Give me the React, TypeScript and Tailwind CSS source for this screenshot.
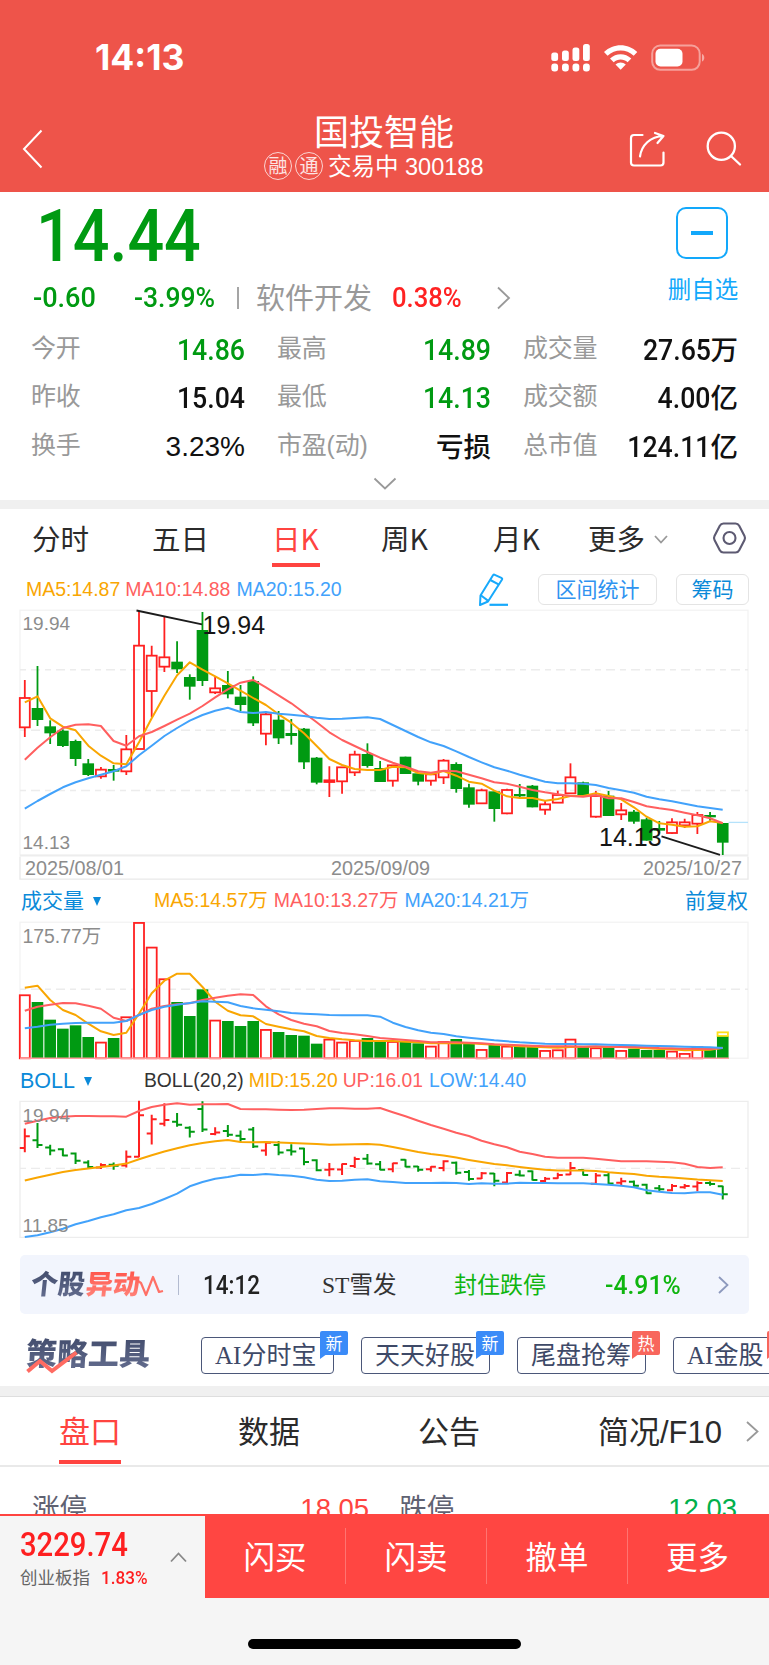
import type { ReactNode } from "react";

type Candle = { up: boolean; top: number; bottom: number; high: number; low: number };

const RED = "#ff2020";
const GREEN = "#009a12";
const ORANGE = "#f9a602";
const PINK = "#ff5f5f";
const BLUE = "#42a2fb";

const FIRST_X = 24.8;
const STEP = 12.69;

// direction, body top, body bottom, high, low (thirds of a pixel)
const rawCandles: [string, number, number, number, number][] = [
  ["r", 294, 382, 240, 411], ["g", 324, 360, 198, 378], ["g", 379, 400, 361, 432], ["g", 392, 438, 388, 441],
  ["g", 423, 477, 419, 498], ["g", 490, 525, 477, 528], ["r", 509, 529, 501, 536], ["g", 507, 515, 495, 542],
  ["r", 448, 514, 405, 525], ["r", 137, 447, 32, 447], ["r", 167, 273, 137, 352], ["r", 172, 200, 50, 216],
  ["g", 185, 208, 124, 219], ["g", 231, 260, 223, 299], ["g", 90, 243, 36, 258], ["r", 265, 277, 230, 282],
  ["g", 255, 283, 213, 295], ["g", 290, 315, 255, 333], ["g", 243, 370, 229, 378], ["r", 343, 401, 335, 436],
  ["g", 359, 415, 333, 432], ["g", 399, 408, 357, 434], ["g", 386, 487, 384, 507], ["g", 473, 548, 471, 553],
  ["r", 541, 546, 499, 591], ["r", 502, 544, 502, 581], ["r", 464, 517, 452, 528], ["g", 462, 498, 430, 503],
  ["g", 504, 546, 483, 546], ["r", 496, 542, 496, 560], ["g", 470, 522, 470, 522], ["g", 520, 545, 520, 556],
  ["r", 523, 542, 523, 557], ["r", 482, 532, 477, 552], ["g", 492, 567, 487, 578], ["g", 562, 614, 551, 623],
  ["r", 571, 610, 566, 610], ["g", 574, 627, 574, 665], ["r", 570, 640, 566, 643], ["g", 582, 589, 552, 592],
  ["g", 557, 622, 555, 622], ["r", 613, 629, 603, 644], ["r", 585, 608, 572, 608], ["r", 532, 580, 490, 580],
  ["g", 547, 585, 545, 585], ["r", 588, 650, 573, 653], ["g", 587, 648, 573, 648], ["r", 631, 643, 609, 660],
  ["g", 635, 665, 630, 671], ["g", 658, 722, 653, 722], ["g", 684, 692, 663, 700], ["r", 667, 699, 655, 702],
  ["r", 667, 676, 656, 684], ["r", 645, 671, 636, 702], ["g", 645, 652, 636, 662], ["g", 669, 728, 669, 765],
];

const candles: Candle[] = rawCandles.map(([d, top, bottom, high, low]) => ({ up: d === "r", top, bottom, high, low }));

const ma5 = [307, 289, 355, 380, 391, 437, 467, 490, 493, 427, 355, 287, 226, 187, 209, 229, 250, 272, 294, 315, 343, 368, 400, 438, 477, 495, 507, 510, 510, 500, 502, 519, 523, 513, 527, 545, 551, 572, 589, 594, 594, 602, 597, 588, 588, 580, 588, 598, 622, 650, 670, 674, 680, 679, 664, 669];
const ma10 = [479, 443, 412, 384, 374, 373, 378, 423, 437, 409, 396, 378, 359, 341, 318, 292, 268, 248, 240, 262, 286, 310, 338, 367, 397, 420, 438, 456, 473, 488, 500, 514, 518, 512, 514, 524, 535, 547, 551, 560, 570, 577, 583, 588, 590, 585, 595, 595, 606, 619, 625, 630, 638, 646, 655, 670];
const ma20 = [626, 603, 582, 562, 547, 535, 524, 514, 499, 466, 437, 408, 384, 362, 345, 332, 323, 336, 339, 336, 341, 344, 348, 353, 357, 356, 354, 352, 357, 375, 393, 411, 427, 438, 454, 471, 487, 502, 512, 524, 535, 545, 550, 550, 551, 555, 564, 571, 578, 590, 598, 604, 611, 619, 624, 629];

const volumes = [344, 366, 419, 446, 436, 471, 486, 474, 410, 127, 201, 296, 366, 408, 328, 420, 423, 438, 423, 448, 456, 465, 467, 491, 477, 486, 481, 474, 486, 484, 486, 490, 498, 484, 477, 488, 508, 492, 498, 499, 500, 511, 509, 477, 501, 503, 501, 511, 506, 510, 510, 513, 520, 500, 510, 468];
const vol5 = [323, 317, 360, 390, 405, 431, 454, 465, 458, 401, 340, 302, 281, 281, 321, 365, 392, 406, 409, 432, 440, 448, 454, 468, 474, 478, 481, 483, 483, 483, 485, 487, 490, 490, 489, 490, 492, 494, 496, 499, 500, 502, 503, 501, 500, 500, 501, 501, 503, 505, 507, 508, 511, 510, 509, 503];
const vol10 = [392, 380, 374, 369, 370, 377, 386, 413, 423, 405, 386, 378, 373, 370, 360, 353, 347, 343, 345, 379, 403, 420, 431, 439, 453, 459, 463, 468, 474, 477, 480, 483, 487, 487, 487, 488, 490, 493, 494, 496, 497, 499, 499, 499, 500, 499, 500, 501, 501, 502, 504, 505, 506, 506, 507, 504];
const vol20 = [445, 440, 434, 431, 429, 428, 428, 428, 423, 405, 390, 380, 374, 369, 364, 365, 367, 378, 385, 389, 394, 399, 401, 403, 405, 406, 406, 406, 410, 428, 441, 451, 458, 462, 469, 473, 477, 481, 484, 487, 489, 491, 492, 492, 493, 493, 494, 495, 496, 497, 498, 499, 500, 501, 502, 504];

const bollUp = [176, 167, 159, 155, 153, 153, 154, 154, 155, 138, 126, 119, 115, 119, 118, 118, 117, 132, 133, 133, 134, 135, 134, 132, 130, 130, 131, 131, 129, 142, 154, 167, 180, 191, 203, 213, 227, 238, 247, 260, 267, 275, 278, 278, 278, 281, 285, 289, 289, 289, 290, 292, 296, 306, 309, 307];
const bollLow = [516, 511, 502, 491, 478, 468, 457, 448, 436, 429, 417, 402, 386, 364, 351, 341, 336, 329, 330, 327, 330, 332, 337, 344, 348, 347, 344, 343, 349, 351, 354, 354, 354, 353, 354, 357, 355, 356, 356, 353, 354, 354, 355, 355, 355, 357, 359, 362, 367, 376, 380, 384, 385, 382, 382, 389];

const xAt = (i: number) => FIRST_X + i * STEP;
const priceY = (v: number) => v / 3 - 8;
const volY = (v: number) => v / 3 - 38;
const bollY = (v: number) => v / 3 - 33;
const toBoll = (v: number) => bollY(109 + (v - 32) * 0.4);

function Line({ data, y, color }: { data: number[]; y: (v: number) => number; color: string }) {
  const points = data.map((v, i) => `${xAt(i).toFixed(1)},${y(v).toFixed(1)}`).join(" ");
  return <polyline points={points} fill="none" stroke={color} strokeWidth="2" strokeLinejoin="round" />;
}

function GridLine({ y }: { y: number }) {
  return <line x1="20" x2="748" y1={y} y2={y} stroke="#ececec" strokeWidth="1.4" strokeDasharray="6 5 9 5" />;
}

const chartText = "font-['Liberation_Sans','Noto_Sans_CJK_SC',sans-serif]";

function PriceChart() {
  return (
    <svg className={`block h-[274px] w-[769px] shrink-0 ${chartText}`} viewBox="0 0 769 274">
      <rect x="20" y="2.2" width="728" height="245" fill="none" stroke="#f3f3f3" strokeWidth="1.3" />
      <GridLine y={61.7} />
      <GridLine y={122.2} />
      <GridLine y={182.5} />
      <path d="M20 247.5h728" stroke="#ededed" strokeWidth="2" />
      <path d="M20 248.5v22.7h728v-22.7" fill="none" stroke="#e9e9e9" strokeWidth="1.3" />
      <text x="22.5" y="22.2" fontSize="19" fill="#8c8c8c">19.94</text>
      <text x="22.5" y="241" fontSize="19" fill="#8c8c8c">14.13</text>
      <text x="25" y="267.3" fontSize="19.8" fill="#8c8c8c">2025/08/01</text>
      <text x="331" y="267.3" fontSize="19.8" fill="#8c8c8c">2025/09/09</text>
      <text x="643" y="267.3" fontSize="19.8" fill="#8c8c8c">2025/10/27</text>
      {candles.map((c, i) => {
        const x = xAt(i);
        const top = priceY(c.top);
        const bottom = priceY(c.bottom);
        if (c.up) {
          return (
            <g key={i} stroke={RED} strokeWidth="1.8" fill="none">
              <path d={`M${x} ${priceY(c.high)}V${top}M${x} ${bottom}V${priceY(c.low)}`} />
              <rect x={x - 5} y={top} width="10" height={bottom - top} />
            </g>
          );
        }
        return (
          <g key={i}>
            <path d={`M${x} ${priceY(c.high)}V${priceY(c.low)}`} stroke={GREEN} strokeWidth="1.8" />
            <rect x={x - 5.8} y={top} width="11.6" height={bottom - top} fill={GREEN} />
          </g>
        );
      })}
      <path d="M728.6 214.4H748" stroke="#b5e2fb" strokeWidth="1.3" />
      <Line data={ma5} y={priceY} color={ORANGE} />
      <Line data={ma10} y={priceY} color={PINK} />
      <Line data={ma20} y={priceY} color={BLUE} />
      <path d="M136.5 2.5 202 16.3M661.5 228.3 720 246.8" stroke="#1c1c1c" strokeWidth="1.8" />
      <text x="202.5" y="25.5" fontSize="25" fill="#151515">19.94</text>
      <text x="599" y="237.5" fontSize="25" fill="#151515">14.13</text>
    </svg>
  );
}

function VolumeChart() {
  const base = 140.3;
  return (
    <svg className={`block h-[144px] w-[769px] shrink-0 ${chartText}`} viewBox="0 0 769 144">
      <rect x="20" y="4.2" width="728" height="136" fill="none" stroke="#f3f3f3" strokeWidth="1.3" />
      <GridLine y={71.2} />
      <text x="22.5" y="24.6" fontSize="19.4" fill="#8c8c8c">175.77万</text>
      {volumes.map((v, i) => {
        const x = xAt(i);
        const top = volY(v);
        return candles[i].up ? (
          <rect key={i} x={x - 5} y={top + 0.6} width="10" height={base - top - 0.6} fill="#fff" stroke={RED} strokeWidth="1.8" />
        ) : (
          <rect key={i} x={x - 5.8} y={top} width="11.6" height={base - top} fill={GREEN} />
        );
      })}
      <rect x={xAt(55) - 5.2} y={volY(457)} width="10.4" height="3.6" fill="#fff" stroke="#ffdf1a" strokeWidth="1.8" />
      <path d="M20 140.3H729" stroke="#ff9d9d" strokeWidth="1.4" />
      <Line data={vol5} y={volY} color={ORANGE} />
      <Line data={vol10} y={volY} color={PINK} />
      <Line data={vol20} y={volY} color={BLUE} />
    </svg>
  );
}

function BollChart() {
  return (
    <svg className={`block h-[142px] w-[769px] shrink-0 ${chartText}`} viewBox="0 0 769 142">
      <rect x="20" y="3.4" width="728" height="136" fill="none" stroke="#ededed" strokeWidth="1.3" />
      <GridLine y={70.4} />
      {candles.map((c, i) => {
        const x = xAt(i);
        const open = toBoll(c.up ? c.bottom : c.top);
        const close = toBoll(c.up ? c.top : c.bottom);
        return (
          <path
            key={i}
            d={`M${x} ${toBoll(c.high) - 0.5}V${toBoll(c.low) + 0.5}M${x - 5} ${open}H${x}M${x} ${close}H${x + 5}`}
            stroke={c.up ? RED : GREEN}
            strokeWidth="2"
          />
        );
      })}
      <Line data={ma20} y={toBoll} color={ORANGE} />
      <Line data={bollUp} y={bollY} color={PINK} />
      <Line data={bollLow} y={bollY} color={BLUE} />
      <text x="22.5" y="24" fontSize="19" fill="#8c8c8c">19.94</text>
      <text x="22.5" y="134" fontSize="19" fill="#8c8c8c">11.85</text>
    </svg>
  );
}

function StatusBar() {
  return (
    <div className="flex h-[115px] items-center pl-[95px] pr-[64px] text-white">
      <span className="font-['Inter',sans-serif] text-[35.500px] font-bold">14:13</span>
      <svg className="ml-auto h-[32px] w-[156px]" viewBox="549 41.5 156 32" fill="currentColor">
        <rect x="551.3" y="52" width="6.8" height="8.5" rx="2.5" />
        <rect x="562" y="50" width="6.8" height="10.5" rx="2.5" />
        <rect x="572.5" y="47" width="6.8" height="13.5" rx="2.5" />
        <rect x="583" y="43.5" width="6.8" height="17" rx="2.5" />
        <rect x="551.3" y="63" width="6.8" height="8" rx="3" />
        <rect x="562" y="63" width="6.8" height="8" rx="3" />
        <rect x="572.5" y="63" width="6.8" height="8" rx="3" />
        <rect x="583" y="63" width="6.8" height="8" rx="3" />
        <path d="M604 51.6c9.300-9 24-9 33.300 0l-3.600 3.700c-7.300-7-18.800-7-26.100 0z" />
        <path d="M610 58c6-5.700 15.300-5.700 21.300 0l-3.700 3.700c-3.900-3.700-10-3.700-13.900 0z" />
        <path d="M615.500 64c3-2.700 7.300-2.700 10.300 0l-5.150 5.300z" />
        <rect x="652.200" y="45" width="47.500" height="24.300" rx="8" fill="none" stroke="currentColor" strokeOpacity="0.45" strokeWidth="2" />
        <rect x="655.500" y="48.300" width="27" height="17.700" rx="5" />
        <path d="M702 53.500c3 1 3 6.500 0 7.500z" opacity="0.5" />
      </svg>
    </div>
  );
}

function Mark({ children }: { children: ReactNode }) {
  return (
    <span className="flex h-[28px] w-[28px] items-center justify-center rounded-full border-[1.5px] border-white/75 text-[19px] leading-none text-white/85">
      {children}
    </span>
  );
}

function TitleBar() {
  return (
    <div className="flex h-[76px] items-start pl-[22px] pr-[27px] text-white">
      <svg className="mt-[14px] h-[40px] w-[22px]" viewBox="0 0 22 40" fill="none" stroke="currentColor" strokeWidth="2">
        <path d="M19.500 1.500 2 20l17.500 18.500" />
      </svg>
      <div className="ml-[220px] flex w-[243px] flex-col">
        <div className="pl-[50px] text-[35px] leading-[36px]">国投智能</div>
        <div className="flex h-[30px] items-center gap-[3px] whitespace-nowrap text-[23.500px] leading-[30px]">
          <Mark>融</Mark>
          <Mark>通</Mark>
          <span className="ml-[2px] mt-px">交易中 300188</span>
        </div>
      </div>
      <svg className="ml-[122px] mt-[15px] h-[38px] w-[36px]" viewBox="630 130 36 38" fill="none" stroke="currentColor" strokeWidth="2.200" strokeLinecap="round" strokeLinejoin="round">
        <path d="M643.500 135H635a3 3 0 0 0-3 3v24.500a3 3 0 0 0 3 3h26.500a3 3 0 0 0 3-3v-10" />
        <path d="M641 156.500c1.500-11 10-20 23.500-20.500M656 133l8.500 3-6 7" />
      </svg>
      <svg className="ml-auto mt-[16px] h-[36px] w-[36px]" viewBox="707 131 36 36" fill="none" stroke="currentColor" strokeWidth="2.300" strokeLinecap="round">
        <circle cx="722.300" cy="146.300" r="13.600" />
        <path d="m732 156 9 8.500" />
      </svg>
    </div>
  );
}

const stats = [
  [
    { label: "今开", value: "14.86", style: "text-[#009a12]" },
    { label: "最高", value: "14.89", style: "text-[#009a12]" },
    { label: "成交量", value: "27.65", unit: "万", style: "text-[#111]" },
  ],
  [
    { label: "昨收", value: "15.04", style: "text-[#111]" },
    { label: "最低", value: "14.13", style: "text-[#009a12]" },
    { label: "成交额", value: "4.00", unit: "亿", style: "text-[#111]" },
  ],
  [
    { label: "换手", value: "3.23%", plain: true, style: "text-[#111]" },
    { label: "市盈(动)", value: "", unit: "亏损", style: "text-[#111]" },
    { label: "总市值", value: "124.11", unit: "亿", style: "text-[#111]" },
  ],
];

function Quote() {
  return (
    <section className="flex h-[308px] flex-col">
      <div className="flex h-[125px] justify-between">
        <div className="pl-[33px]">
          <div className="h-[87px] pt-[7px]">
            <span className="ml-[3px] inline-block origin-left scale-x-[0.885] font-['Roboto',sans-serif] text-[73px] font-medium leading-[74px] text-[#009a12]">14.44</span>
          </div>
          <div className="flex h-[38px] items-center font-['Roboto',sans-serif] text-[28.500px] font-medium text-[#009a12]">
            <span className="w-[101px] origin-left scale-x-[0.95]">-0.60</span>
            <span className="w-[103px] origin-left scale-x-[0.93] whitespace-nowrap">-3.99%</span>
            <span className="h-[22px] w-[2px] bg-[#a5a5a5]" />
            <span className="ml-[17px] -mt-[4px] font-['Noto_Sans_CJK_SC',sans-serif] text-[29px] font-normal leading-none text-[#999]">软件开发</span>
            <span className="ml-[20px] w-[105px] origin-left scale-x-[0.9] text-[#ff2222]">0.38%</span>
            <svg className="h-[24px] w-[14px]" viewBox="0 0 14 24" fill="none" stroke="#999" strokeWidth="1.800">
              <path d="m1 1.500 11 10.500L1 22.500" />
            </svg>
          </div>
        </div>
        <div className="flex w-[134px] flex-col items-center pt-[15px]">
          <div className="flex h-[52px] w-[52px] items-center justify-center rounded-[10px] border-2 border-[#12a8fb]">
            <span className="h-[4px] w-[22px] bg-[#12a8fb]" />
          </div>
          <span className="mt-[13px] pl-[2px] text-[23.500px] leading-[36px] text-[#12a8fb]">删自选</span>
        </div>
      </div>
      <div className="mt-[9px] grid grid-rows-3 pl-[31px] pr-[31px]">
        {stats.map((row, r) => (
          <div key={r} className="grid h-[48.500px] grid-cols-[214px_214px_215px] justify-between">
            {row.map((s) => (
              <div key={s.label} className="flex items-center justify-between whitespace-nowrap">
                <span className="pb-[4px] font-['Liberation_Sans','Noto_Sans_CJK_SC',sans-serif] text-[25px] leading-none tracking-[-0.2px] text-[#999]">{s.label}</span>
                <span className={`flex items-center ${s.style}`}>
                  {"plain" in s ? (
                    <span className="text-[28px]">{s.value}</span>
                  ) : (
                    <span className="origin-right scale-x-[0.92] font-['Roboto',sans-serif] text-[29px] font-medium">{s.value}</span>
                  )}
                  {"unit" in s ? <span className="text-[27.500px] font-medium leading-none">{s.unit}</span> : null}
                </span>
              </div>
            ))}
          </div>
        ))}
      </div>
      <svg className="mx-auto mt-[5px] h-[14px] w-[24px]" viewBox="0 0 24 14" fill="none" stroke="#999" strokeWidth="1.800">
        <path d="m1.500 1.500 10.500 10 10.500-10" />
      </svg>
    </section>
  );
}

function PeriodTabs() {
  return (
    <div className="flex h-[62px] items-start pt-[9px] font-['Noto_Sans_CJK_SC',sans-serif] text-[28.500px] leading-[39px] text-[#2b2b2b]">
      <span className="ml-[32px] w-[120px]">分时</span>
      <span className="w-[120px]">五日</span>
      <span className="flex w-[109px] flex-col text-[#ff4440]">
        日K
        <span className="mt-[6px] h-[4px] w-[48px] bg-[#ff4440]" />
      </span>
      <span className="w-[112px]">周K</span>
      <span className="w-[95px]">月K</span>
      <span>更多</span>
      <svg className="ml-[9px] mt-[17px] h-[9px] w-[14px]" viewBox="0 0 14 9" fill="none" stroke="#999" strokeWidth="1.800">
        <path d="m1 1 6 6.500L13 1" />
      </svg>
      <svg className="ml-auto mr-[22px] mt-[3px] h-[34px] w-[35px]" viewBox="0 0 35 34" fill="none" stroke="#5d5a72" strokeWidth="2.100" strokeLinejoin="round">
        <path d="M11.500 2.500h12q2.500 0 3.700 2.300l5.300 10.200q1 2 0 4l-5.300 10.200q-1.200 2.300-3.700 2.300h-12q-2.500 0-3.700-2.300L2.500 19q-1-2 0-4l5.300-10.200q1.200-2.300 3.700-2.300z" />
        <circle cx="17.500" cy="17" r="6" />
      </svg>
    </div>
  );
}

function Caret() {
  return <span className="ml-[9px] h-0 w-0 border-x-[4.500px] border-t-[9px] border-x-transparent border-t-[#0b8ad9]" />;
}

function IndicatorRow() {
  return (
    <div className="flex h-[37px] items-center whitespace-nowrap pl-[26px] pr-[20px] text-[19.500px]">
      <span className="text-[#f9a602]">MA5:14.87</span>
      <span className="ml-[5px] text-[#ff5f5f]">MA10:14.88</span>
      <span className="ml-[6px] text-[#42a2fb]">MA20:15.20</span>
      <svg className="ml-auto h-[34px] w-[32px]" viewBox="479 571.5 32 34" fill="none" stroke="#17a9fb" strokeWidth="2" strokeLinejoin="round">
        <path d="M480.500 594 493 573.800q.7-1 1.800-.5l6.600 3q1.200.7.5 1.900L488 600l-8 3.500z" />
        <path d="m490.300 578.500 8.700 4.700M480.800 593.800l7.400 5.600" />
        <path d="M489.500 603.300h18.500" strokeWidth="2.200" />
      </svg>
      <span className="ml-[27px] flex h-[31px] w-[119px] items-center justify-center rounded-[6px] border border-[#e4e4e4] text-[21px] text-[#2f93f0]">区间统计</span>
      <span className="ml-[19px] flex h-[31px] w-[73px] items-center justify-center rounded-[6px] border border-[#e4e4e4] text-[21px] text-[#0b8ad9]">筹码</span>
    </div>
  );
}

function Pulse() {
  return (
    <svg className="-ml-[3px] mt-[2px] h-[24px] w-[27px]" viewBox="0 0 27 24" fill="none" stroke="#ff7066" strokeWidth="2.200" strokeLinejoin="round">
      <path d="m1 7 3 2 5 12 7-18 6 15 4-1" />
    </svg>
  );
}

function Movers() {
  return (
    <div className="mx-[20px] mt-[15px] flex h-[59px] shrink-0 items-center whitespace-nowrap rounded-[5px] bg-[#f2f5fd] pl-[11px]">
      <span className="-skew-x-6 bg-linear-to-b from-[#3f4969] to-[#6a7395] bg-clip-text text-[27px] font-black leading-[36px] text-transparent">个股</span>
      <span className="ml-[1px] -skew-x-6 bg-linear-to-b from-[#ff4d44] to-[#ff8a82] bg-clip-text text-[27px] font-black leading-[36px] text-transparent">异动</span>
      <Pulse />
      <span className="ml-[14px] h-[20px] w-px bg-[#b3bbd0]" />
      <span className="ml-[24px] mt-[2px] w-[119px] origin-left scale-x-[0.88] font-['Roboto',sans-serif] text-[25.500px] font-medium text-[#222]">14:12</span>
      <span className="mt-[2px] w-[132px] font-['Liberation_Serif','Noto_Sans_CJK_SC',serif] text-[23.500px] text-[#333]">ST雪发</span>
      <span className="mt-[2px] text-[23px] text-[#0fb50f]">封住跌停</span>
      <span className="ml-[59px] mt-[2px] w-[113px] origin-left scale-x-[0.97] font-['Roboto',sans-serif] text-[25.500px] font-medium text-[#0fb50f]">-4.91%</span>
      <svg className="h-[18px] w-[11px]" viewBox="0 0 11 18" fill="none" stroke="#8d99bd" strokeWidth="1.800">
        <path d="m1 1 8.500 8L1 17" />
      </svg>
    </div>
  );
}

const tools = [
  { name: "AI分时宝", badge: "新", box: "w-[133px]" },
  { name: "天天好股", badge: "新", box: "w-[129px]" },
  { name: "尾盘抢筹", badge: "热", box: "w-[129px]" },
  { name: "AI金股", badge: "热", box: "w-[108px]" },
];

function Tools() {
  return (
    <div className="flex h-[72px] shrink-0 items-start overflow-hidden whitespace-nowrap pl-[26px] pt-[17px]">
      <div className="relative mt-[2px] w-[175px] shrink-0">
        <span className="inline-block -skew-x-3 bg-linear-to-b from-[#3f4969] to-[#6a7395] bg-clip-text text-[31px] font-black leading-[44px] text-transparent">策略工具</span>
        <svg className="absolute left-0 top-[18px] h-[28px] w-[54px]" viewBox="0 0 54 28" fill="none" stroke="#ff6b62" strokeWidth="4">
          <path d="M1.500 20.500 14 10l12 10L50.500 1.500" />
        </svg>
      </div>
      <div className="flex gap-[27px] pt-[6px]">
        {tools.map((t) => (
          <div key={t.name} className={`relative flex h-[37px] shrink-0 items-center rounded-[4px] border border-[#4b5779] pl-[13px] pt-px font-['Liberation_Serif','Noto_Sans_CJK_SC',serif] text-[25px] text-[#3e4967] ${t.box}`}>
            {t.name}
            <span className="absolute -right-[15px] -top-[7px] h-[28px] w-[28px]">
              <svg className={t.badge === "新" ? "absolute inset-0 text-[#3a8bf8]" : "absolute inset-0 text-[#f8665c]"} viewBox="0 0 28 28" fill="currentColor">
                <path d="M2 0h24q2 0 2 2v20q0 2-2 2H5.500L0 28V2q0-2 2-2z" />
              </svg>
              <span className="relative flex h-[23px] items-center justify-center font-['Noto_Sans_CJK_SC',sans-serif] text-[17px] text-white">{t.badge}</span>
            </span>
          </div>
        ))}
      </div>
    </div>
  );
}

function DetailTabs() {
  return (
    <div className="flex h-[70px] shrink-0 items-start whitespace-nowrap border-b-2 border-[#e9e9e9] pl-[59px] text-[31px] leading-[71px] text-[#2b2b2b]">
      <div className="flex w-[179px] flex-col text-[#ff4440]">
        <span className="h-[63px]">盘口</span>
        <span className="h-[4px] w-[62px] bg-[#ff4440]" />
      </div>
      <span className="w-[180px]">数据</span>
      <span className="w-[180px]">公告</span>
      <span className="w-[148px]">简况/F10</span>
      <svg className="mt-[24px] h-[21px] w-[13px]" viewBox="0 0 13 21" fill="none" stroke="#999" strokeWidth="1.800">
        <path d="m1 1 10.500 9.500L1 20" />
      </svg>
    </div>
  );
}

function BottomBar() {
  return (
    <footer className="relative flex h-[84px] shrink-0 border-t-2 border-[#ff4440] bg-[#f5f5f5]">
      <div className="flex w-[205px] items-center pl-[20px]">
        <div className="flex w-[150px] flex-col pt-[3px]">
          <span className="origin-left scale-x-[0.9] font-['Roboto',sans-serif] text-[32.500px] font-medium leading-[36px] text-[#fe1f20]">3229.74</span>
          <span className="mt-[3px] flex h-[24px] items-center whitespace-nowrap text-[17.500px] text-[#666]">
            创业板指
            <span className="ml-[11px] origin-left scale-x-[0.9] font-['Roboto',sans-serif] text-[19px] font-medium text-[#fe1f20]">1.83%</span>
          </span>
        </div>
        <svg className="h-[11px] w-[17px]" viewBox="0 0 17 11" fill="none" stroke="#888" strokeWidth="1.800">
          <path d="m1 9.500 7.500-8 7.500 8" />
        </svg>
      </div>
      <div className="-mt-[2px] grid h-[84px] flex-1 grid-cols-4 bg-[#ff4642] py-[14px] text-[31.500px] text-white">
        {["闪买", "闪卖", "撤单", "更多"].map((t) => (
          <span key={t} className="flex items-center justify-center border-r border-white/25 pt-[6px] leading-none last:border-r-0 last:pr-[2px]">{t}</span>
        ))}
      </div>
    </footer>
  );
}

export default function App() {
  return (
    <main className="flex h-[1665px] w-[769px] flex-col overflow-hidden bg-white font-['Liberation_Sans','Noto_Sans_CJK_SC',sans-serif]">
      <header className="h-[192px] shrink-0 bg-[#ee544a]">
        <StatusBar />
        <TitleBar />
      </header>
      <Quote />
      <div className="h-[9px] shrink-0 bg-[#f0f0f0]" />
      <PeriodTabs />
      <IndicatorRow />
      <PriceChart />
      <div className="flex h-[36px] shrink-0 items-center whitespace-nowrap pl-[21px] pr-[21px] pt-[2px] text-[19.500px]">
        <span className="text-[21px] text-[#0b8ad9]">成交量</span>
        <Caret />
        <span className="ml-[53px] text-[#f9a602]">MA5:14.57万</span>
        <span className="ml-[6px] text-[#ff5f5f]">MA10:13.27万</span>
        <span className="ml-[6px] text-[#42a2fb]">MA20:14.21万</span>
        <span className="ml-auto text-[21px] text-[#0b8ad9]">前复权</span>
      </div>
      <VolumeChart />
      <div className="flex h-[36px] shrink-0 items-center whitespace-nowrap pl-[20px] pt-[2px] text-[19.300px]">
        <span className="text-[21.500px] text-[#0b8ad9]">BOLL</span>
        <Caret />
        <span className="ml-[52px] text-[#333]">BOLL(20,2)</span>
        <span className="ml-[5px] text-[#f9a602]">MID:15.20</span>
        <span className="ml-[5px] text-[#ff5f5f]">UP:16.01</span>
        <span className="ml-[6px] text-[#42a2fb]">LOW:14.40</span>
      </div>
      <BollChart />
      <Movers />
      <Tools />
      <div className="h-[11px] shrink-0 border-b border-[#dedede] bg-[#f0f0f0]" />
      <DetailTabs />
      <div className="flex h-[47px] shrink-0 items-start overflow-hidden whitespace-nowrap px-[32px] pt-[22px] text-[27.500px] leading-[40px] text-[#5f6272]">
        <span>涨停</span>
        <span className="ml-auto text-[#ff4440]">18.05</span>
        <span className="ml-[30px]">跌停</span>
        <span className="ml-[214px] text-[#00b04c]">12.03</span>
      </div>
      <BottomBar />
      <div className="flex flex-1 items-end justify-center bg-[#f5f5f5] pb-[16px]">
        <div className="h-[10px] w-[273px] rounded-full bg-black" />
      </div>
    </main>
  );
}
